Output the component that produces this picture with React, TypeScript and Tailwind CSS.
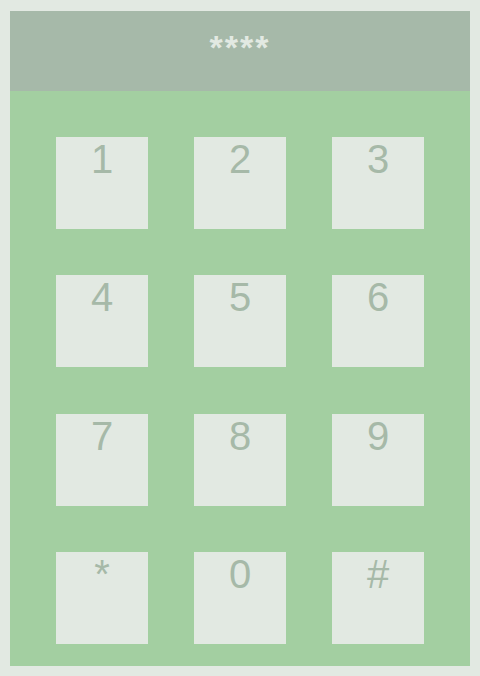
import React from 'react';

const KEYS = ['1', '2', '3', '4', '5', '6', '7', '8', '9', '*', '0', '#'];

export default function App() {
  return (
    <div className="min-h-[676px] bg-[#e2e9e2] pt-[11px] px-[10px] pb-[10px] font-['Liberation_Sans',Arial,sans-serif]">
      <div className="flex flex-col w-[460px]">
        <div className="flex h-[80px] items-center justify-center bg-[#a6b9a9] pb-[8px] text-[34px] font-bold leading-none text-[#e2e9e2]">
          <span className="tracking-[2px]">****</span>
        </div>
        <div className="grid grid-cols-3 gap-x-[46px] gap-y-[46.33px] bg-[#a3cfa1] px-[46px] pt-[46px] pb-[22px]">
          {KEYS.map((key) => (
            <button
              key={key}
              type="button"
              className="flex h-[92px] w-[92px] justify-center bg-[#e2e9e2] text-[40px] leading-[normal] text-[#a6b9a8]"
            >
              {key}
            </button>
          ))}
        </div>
      </div>
    </div>
  );
}
